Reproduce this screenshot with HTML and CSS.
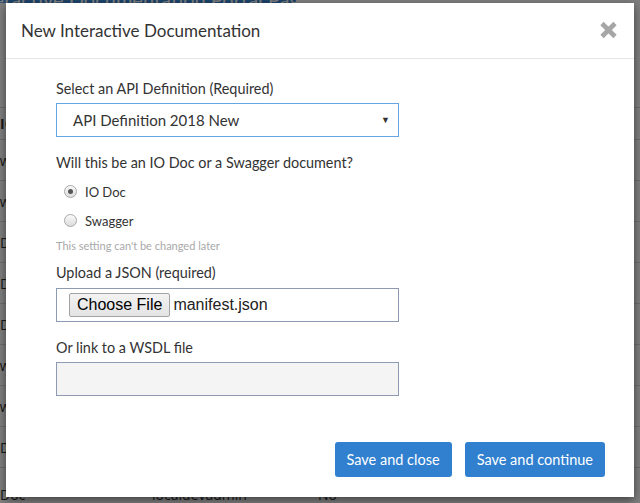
FILE: index.html
```html
<!DOCTYPE html>
<html>
<head>
<meta charset="utf-8">
<link rel="stylesheet" href="styles.css">
</head>
<body>
<div class="page">
  <div class="topbar"><span class="topbar-text">Interactive Documentation Portal Page Settings</span></div>
  <div class="table">
    <div class="row head"><span class="c1">IO Docs</span><span class="c2">Owner</span><span class="c3">Public</span></div>
    <div class="row"><span class="c1 cut">Swagger</span><span class="c2">localdevadmin</span><span class="c3">No</span></div>
    <div class="row"><span class="c1 cut">Swagger</span><span class="c2">localdevadmin</span><span class="c3">No</span></div>
    <div class="row"><span class="c1">Doc</span><span class="c2">localdevadmin</span><span class="c3">No</span></div>
    <div class="row"><span class="c1">Doc</span><span class="c2">localdevadmin</span><span class="c3">No</span></div>
    <div class="row"><span class="c1">Doc</span><span class="c2">localdevadmin</span><span class="c3">No</span></div>
    <div class="row"><span class="c1 cut">Swagger</span><span class="c2">localdevadmin</span><span class="c3">No</span></div>
    <div class="row"><span class="c1 cut">Swagger</span><span class="c2">localdevadmin</span><span class="c3">No</span></div>
    <div class="row"><span class="c1">Doc</span><span class="c2">localdevadmin</span><span class="c3">No</span></div>
    <div class="row last"><span class="c1">Doc</span><span class="c2">localdevadmin</span><span class="c3">No</span></div>
  </div>
</div>
<div class="backdrop"></div>
<div class="modal">
  <div class="modal-header">
    <h2 class="modal-title">New Interactive Documentation</h2>
    <span class="close">
      <svg width="19" height="18" viewBox="0 0 19 18"><path d="M3 2.5 L16 15.5 M16 2.5 L3 15.5" stroke="#a6a6a6" stroke-width="4.6" fill="none"/></svg>
    </span>
  </div>
  <div class="modal-body">
    <div class="label">Select an API Definition (Required)</div>
    <div class="select"><span>API Definition 2018 New</span><span class="arrow">&#9660;</span></div>
    <div class="label question">Will this be an IO Doc or a Swagger document?</div>
    <div class="radio-row first"><span class="radio checked"></span><span class="radio-label">IO Doc</span></div>
    <div class="radio-row"><span class="radio"></span><span class="radio-label">Swagger</span></div>
    <div class="help">This setting can't be changed later</div>
    <div class="label upload">Upload a JSON (required)</div>
    <div class="file-box"><span class="file-btn">Choose File</span><span class="file-name">manifest.json</span></div>
    <div class="label wsdl">Or link to a WSDL file</div>
    <div class="text-input"></div>
  </div>
  <div class="modal-footer">
    <span class="btn">Save and close</span>
    <span class="btn">Save and continue</span>
  </div>
</div>
</body>
</html>
```
FILE: styles.css
```css
html, body {
  margin: 0;
  padding: 0;
}
body {
  width: 640px;
  height: 503px;
  overflow: hidden;
  background: #fff;
  font-family: Lato, "Open Sans", sans-serif;
  color: #333;
  position: relative;
}
.page {
  display: flex;
  flex-direction: column;
  height: 503px;
  overflow: hidden;
}
.topbar {
  height: 3px;
  width: 296px;
  background: #3a88d6;
  overflow: hidden;
  display: flex;
  align-items: flex-end;
  flex-shrink: 0;
}
.topbar-text {
  color: #fff;
  font-size: 20px;
  line-height: 0px;
  white-space: nowrap;
  margin-left: -30px;
  padding-bottom: 4px;
}
.table {
  margin-top: 104px;
  display: flex;
  flex-direction: column;
}
.row {
  height: 40px;
  border-top: 1px solid #ddd;
  display: flex;
  align-items: center;
  font-size: 14px;
  font-family: "Open Sans", sans-serif;
  color: #333;
  flex-shrink: 0;
}
.row.head {
  height: 31px;
  font-weight: bold;
}
.row.last {
  height: 36px;
  align-items: flex-end;
}
.c1 { width: 152px; }
.c1.cut { margin-left: -8px; width: 160px; }
.c2 { width: 166px; }
.c3 { width: 80px; }
.backdrop {
  position: absolute;
  inset: 0;
  background: rgba(0, 0, 0, 0.5);
}
.modal {
  position: absolute;
  left: 6px;
  top: 3px;
  width: 628px;
  height: 494px;
  background: #fff;
  display: flex;
  flex-direction: column;
  box-shadow: 0 3px 9px rgba(0,0,0,0.5);
}
.modal-header {
  height: 55px;
  border-bottom: 1px solid #e5e5e5;
  display: flex;
  align-items: center;
  justify-content: space-between;
  padding: 0 16px 0 15px;
}
.modal-title {
  margin: 0;
  font-size: 17px;
  font-weight: normal;
  color: #333;
}
.close {
  display: flex;
  margin-bottom: 1px;
}
.modal-body {
  padding: 20px 0 0 50px;
  display: flex;
  flex-direction: column;
  width: 343px;
}
.label {
  font-size: 14.4px;
  line-height: 20px;
  color: #333;
}
.select {
  margin-top: 4px;
  height: 34px;
  box-sizing: border-box;
  border: 1px solid #66a6e2;
  display: flex;
  align-items: center;
  justify-content: space-between;
  padding: 0 8px 0 16px;
  font-size: 15px;
  color: #333;
}
.arrow {
  font-size: 9px;
  color: #333;
  margin-top: -2px;
}
.question {
  margin-top: 16px;
}
.radio-row {
  display: flex;
  align-items: center;
  height: 20px;
  margin-top: 9px;
  padding-left: 8px;
  font-size: 13px;
}
.radio {
  width: 11px;
  height: 11px;
  border-radius: 50%;
  border: 1px solid #a9a9a9;
  background: linear-gradient(#fafafa, #dcdcdc);
  display: flex;
  align-items: center;
  justify-content: center;
  margin-right: 8px;
  margin-top: -2px;
}
.radio.checked::after {
  content: "";
  width: 5px;
  height: 5px;
  border-radius: 50%;
  background: #555;
}
.radio-label {
  color: #333;
}
.help {
  margin-top: 8px;
  font-size: 11px;
  line-height: 14px;
  color: #a8a8a8;
}
.upload {
  margin-top: 10px;
}
.file-box {
  margin-top: 5px;
  height: 34px;
  box-sizing: border-box;
  border: 1px solid #8d9ab2;
  display: flex;
  align-items: center;
  padding-left: 12px;
  font-family: "Liberation Sans", Arial, sans-serif;
  font-size: 16px;
  color: #222;
}
.file-btn {
  height: 24px;
  box-sizing: border-box;
  padding: 0 7px;
  border: 1px solid #a3a3a3;
  border-radius: 2px;
  background: linear-gradient(#f3f3f3, #e3e3e3);
  display: flex;
  align-items: center;
  color: #000;
  margin-right: 3px;
}
.wsdl {
  margin-top: 16px;
}
.text-input {
  margin-top: 4px;
  height: 34px;
  box-sizing: border-box;
  border: 1px solid #8d9ab2;
  background: #f4f4f4;
}
.modal-footer {
  margin-top: auto;
  display: flex;
  justify-content: flex-end;
  gap: 13px;
  padding: 0 29px 20px 0;
}
.btn {
  height: 35px;
  padding: 0 12px;
  background: #3080cf;
  border-radius: 3px;
  color: #fff;
  font-size: 14.5px;
  display: flex;
  align-items: center;
}
```
